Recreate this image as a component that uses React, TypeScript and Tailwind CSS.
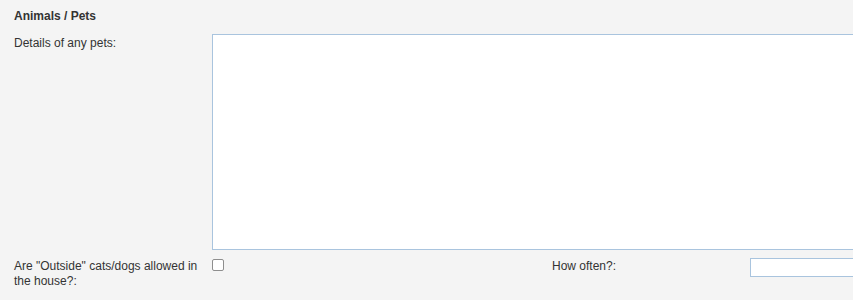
export default function App() {
  return (
    <div className="h-[300px] w-[853px] overflow-hidden bg-[#f4f4f4] text-[12px] leading-[15px] text-[#333] [font-family:'Liberation_Sans',Arial,sans-serif]">
      <div className="pl-[14px] pt-[9px]">
        <h3 className="text-[12px] font-bold leading-[15px] text-[#333]">Animals / Pets</h3>
        <div className="mt-[10px] flex">
          <label className="w-[198px] shrink-0 pt-[2px]">Details of any pets:</label>
          <textarea className="h-[216px] w-[660px] shrink-0 resize-none border border-[#a9c4de] bg-white outline-none" />
        </div>
        <div className="mt-[8px] flex">
          <label className="w-[198px] shrink-0 pr-[4px] pt-[1px]">
            Are "Outside" cats/dogs allowed in the house?:
          </label>
          <div className="w-[340px] shrink-0 pt-[1px]">
            <input type="checkbox" className="m-0 h-[12px] w-[12px] appearance-none rounded-[2px] border border-[#8e8e8e] bg-white" />
          </div>
          <label className="w-[198px] shrink-0 pt-[1px]">How often?:</label>
          <input type="text" className="h-[19px] w-[140px] shrink-0 border border-[#a9c4de] bg-white outline-none" />
        </div>
      </div>
    </div>
  );
}
